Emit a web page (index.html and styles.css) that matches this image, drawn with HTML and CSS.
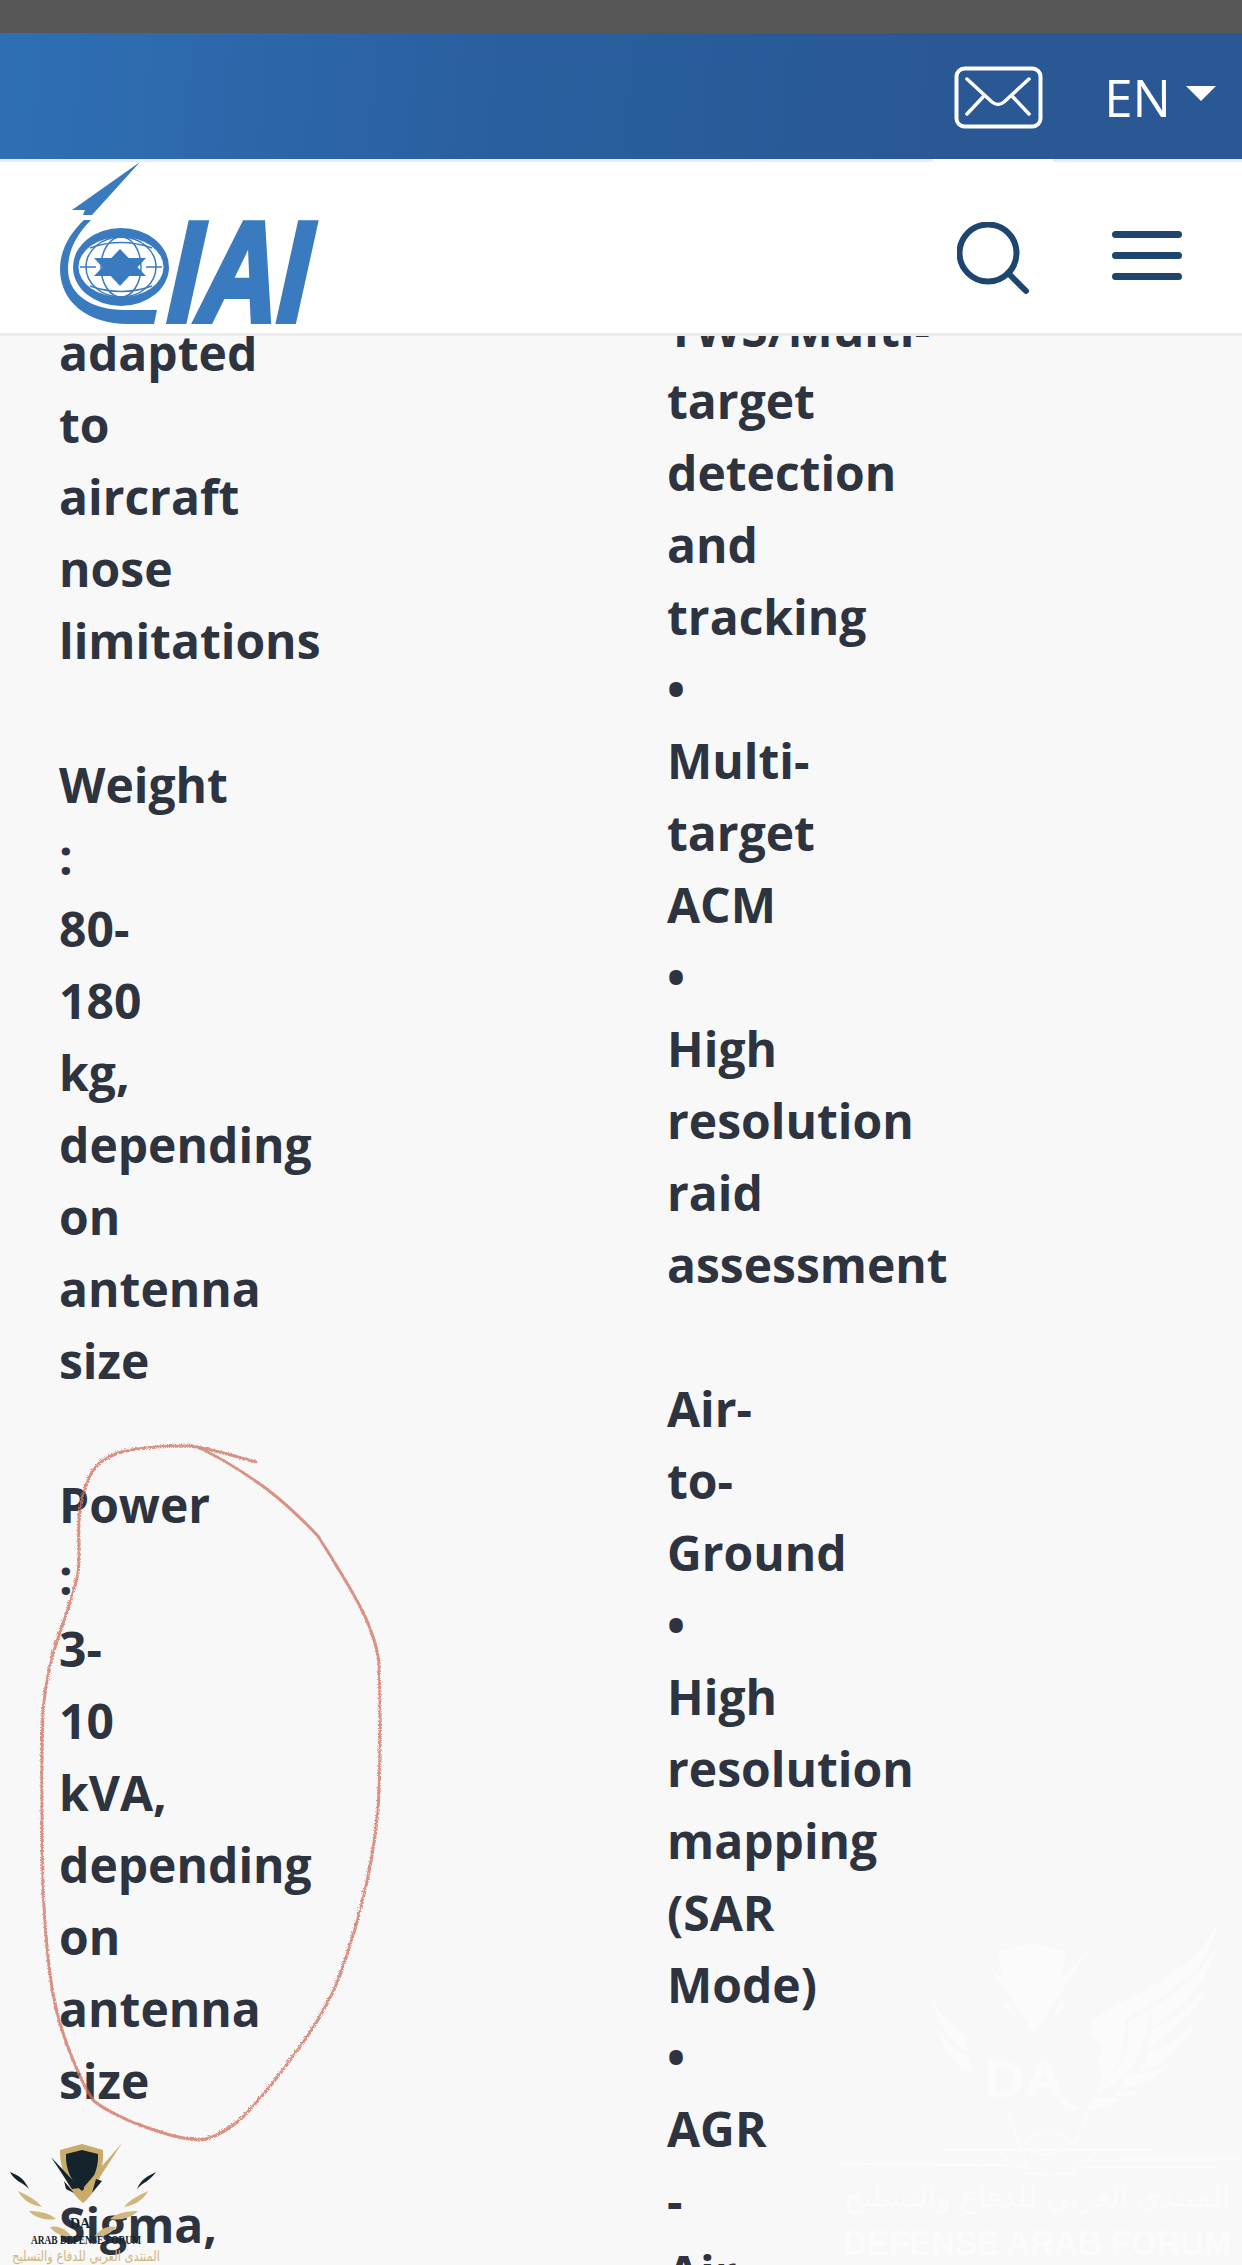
FILE: index.html
```html
<!DOCTYPE html>
<html lang="en">
<head>
    <meta charset="UTF-8">
    <title>IAI</title>
    <link rel="stylesheet" href="styles.css">
</head>
<body>
    <header class="header">
        <div class="status"></div>
        <div class="topbar">
            <svg class="icon_mail" width="90" height="64" viewBox="0 0 90 64" fill="none" stroke="#fff" stroke-linecap="round" stroke-linejoin="round">
                <rect x="2.5" y="2.5" width="84" height="58" rx="8" stroke-width="4"/>
                <path d="M13 13 L38 36 Q44 41 50 36 L75 13 M29 31 L13 48 M59 31 L75 48" stroke-width="3.5"/>
            </svg>
            <span class="lang">EN</span>
            <span class="caret"></span>
        </div>
        <div class="navbar">
            <svg class="logo" width="270" height="170" viewBox="55 160 270 170">
                <path fill="#3a7bbf" d="M140 163 L72 211 L85 211 L83 216 L92 216 Z"/>
                <path fill="#3a7bbf" d="M84 221 L91 221 C76 236 68 252 68 270 C68 296 92 311 125 311 L157 311 L154 325 L128 325 C88 325 60 303 60 270 C60 251 70 234 84 221 Z"/>
                <ellipse cx="121" cy="268" rx="48" ry="39" fill="#3a7bbf"/>
                <ellipse cx="121" cy="268" rx="42.5" ry="30" fill="#fff"/>
                <g fill="none" stroke="#3a7bbf" stroke-width="1.5">
                    <ellipse cx="121" cy="268" rx="35" ry="30"/>
                    <ellipse cx="121" cy="268" rx="20" ry="30"/>
                    <path d="M90 249 Q121 238 152 249 M90 287 Q121 298 152 287 M80 268 H96 M146 268 H162"/>
                </g>
                <path fill="#3a7bbf" d="M120 250 L146 277 L94 277 Z"/>
                <path fill="#3a7bbf" d="M120 287 L94 259 L146 259 Z"/>
                <text class="logo_text" transform="translate(167 322) skewX(-4)" textLength="140" lengthAdjust="spacingAndGlyphs">IAI</text>
            </svg>
            <div class="nav_icons">
                <svg width="76" height="76" viewBox="0 0 76 76" fill="none" stroke="#1d4570" stroke-linecap="round">
                    <circle cx="31" cy="31" r="28.5" stroke-width="6"/>
                    <path d="M51 51 L69 69" stroke-width="6"/>
                </svg>
                <div class="burger"><span></span><span></span><span></span></div>
            </div>
        </div>
    </header>

    <div class="main">
        <div class="col col_left">
            <p>adapted<br>to<br>aircraft<br>nose<br>limitations</p>
            <p>Weight<br>:<br>80-<br>180<br>kg,<br>depending<br>on<br>antenna<br>size</p>
            <p>Power<br>:<br>3-<br>10<br>kVA,<br>depending<br>on<br>antenna<br>size</p>
            <p>Sigma,</p>
        </div>
        <div class="col">
            <p>TWS/Multi-<br>target<br>detection<br>and<br>tracking<br>•<br>Multi-<br>target<br>ACM<br>•<br>High<br>resolution<br>raid<br>assessment</p>
            <p>Air-<br>to-<br>Ground<br>•<br>High<br>resolution<br>mapping<br>(SAR<br>Mode)<br>•<br>AGR<br>-<br>Air</p>
        </div>
    </div>

    <!-- pencil mark over the power block -->
    <svg class="scribble" width="1242" height="2265" viewBox="0 0 1242 2265" fill="none">
        <filter id="pencil"><feTurbulence baseFrequency="0.7" numOctaves="2" result="n"/><feDisplacementMap in="SourceGraphic" in2="n" scale="3"/></filter>
        <path filter="url(#pencil)" stroke="#cf6f5c" stroke-width="3" stroke-opacity="0.75" stroke-linecap="round"
            d="M255 1461 C235 1456 210 1447 187 1445 C165 1445 135 1447 117 1452 C103 1457 95 1464 90 1473 C82 1490 79 1505 78 1521 C77 1540 80 1555 77 1572 C72 1600 60 1625 53 1650 C46 1675 43 1695 42 1714 C40 1770 41 1825 42 1879 C43 1920 46 1950 50 1980 C53 2000 58 2020 63 2035 C72 2060 82 2085 93 2100 C105 2110 120 2116 133 2122 C155 2130 180 2139 200 2139 C215 2137 228 2128 240 2118 C260 2098 278 2075 293 2054 C310 2032 322 2012 333 1989 C345 1962 352 1935 360 1907 C368 1875 374 1842 377 1810 C380 1760 380 1710 378 1659 C375 1642 370 1628 363 1613 C350 1587 333 1560 317 1535 C300 1517 285 1503 267 1489 C245 1473 222 1458 200 1448"/>
    </svg>

    <svg class="forum_logo" width="160" height="125" viewBox="0 0 160 125">
        <path fill="#c9ab6c" d="M60 7 L82 1 L103 7 C104 30 96 50 83 60 C70 50 60 30 60 7 Z"/>
        <path fill="#14232c" d="M66 11 L82 7 L98 11 C99 26 92 40 82 48 C72 40 65 26 66 11 Z"/>
        <path fill="#c9ab6c" d="M122 0 L83 60 L84 44 Z"/>
        <path fill="#14232c" d="M51 14 L80 45 L72 46 Z M64 38 L74 50 L66 46 Z M102 38 L92 50 L96 36 Z"/>
        <g fill="#14232c"><path d="M10 29 C14 38 24 40 29 46 C24 36 20 33 10 29 Z"/><path d="M156 29 C150 38 142 40 137 46 C141 36 148 33 156 29 Z"/></g>
        <g fill="#d1b77f">
            <path d="M18 48 C26 52 36 56 42 64 C30 62 22 56 18 48 Z"/>
            <path d="M148 48 C140 52 130 56 124 64 C136 62 144 56 148 48 Z"/>
            <path d="M29 68 C38 68 50 70 56 76 C44 78 34 74 29 68 Z"/>
            <path d="M138 68 C128 68 116 70 110 76 C122 78 132 74 138 68 Z"/>
            <path d="M50 84 C58 82 66 86 72 94 C62 94 54 90 50 84 Z"/>
            <path d="M116 84 C108 82 100 86 94 94 C104 94 112 90 116 84 Z"/>
        </g>
        <text class="forum_da" x="70" y="85">DA</text>
        <text class="forum_en" x="31" y="101" textLength="110" lengthAdjust="spacingAndGlyphs">ARAB DEFENSE FORUM</text>
        <text class="forum_ar" x="12" y="118" textLength="148" lengthAdjust="spacingAndGlyphs">المنتدى العربي للدفاع والتسليح</text>
    </svg>

    <svg class="forum_faint" width="402" height="365" viewBox="-120 0 1206 1095">
        <g class="faint_fill">
            <path d="M355 155 L455 130 L557 155 C555 190 548 225 535 250 L635 135 L462 400 L325 195 L375 245 C362 215 356 185 355 155 Z"/>
            <path d="M378 305 L415 355 L372 325 Z M545 305 L552 325 L518 350 Z"/>
            <path d="M155 295 C180 350 220 380 260 410 L262 460 C210 420 170 370 155 295 Z M175 385 C200 430 230 450 265 470 L278 515 C230 510 185 450 175 385 Z"/>
            <path d="M1022 45 C1000 110 950 170 870 225 C800 270 720 310 650 350 C630 370 630 395 640 410 C665 430 675 460 650 480 C665 510 665 530 660 550 C710 520 735 470 735 360 C790 320 860 290 900 250 C950 215 985 180 1022 45 Z"/>
            <path d="M1000 155 C985 250 900 330 815 380 L815 325 C890 280 960 220 1000 155 Z M980 255 C960 330 880 390 805 445 L815 390 C880 360 940 320 980 255 Z"/>
            <path d="M805 335 C800 450 760 530 650 580 L660 555 C730 510 750 440 745 365 Z M945 370 C910 440 850 490 780 515 L805 460 C860 440 910 410 945 370 Z"/>
            <path d="M860 500 C820 540 780 560 715 565 L740 525 C790 525 830 515 860 500 Z M790 570 C760 585 735 590 710 590 L705 578 Z M725 600 C690 620 650 630 615 630 L640 595 C670 590 700 590 725 600 Z M535 590 L605 630 L560 635 Z"/>
        </g>
        <g class="faint_line" fill="none">
            <path d="M190 750 H825 M710 775 H1075 M-120 790 Q200 795 385 795 M600 802 H1010 M385 640 L430 760 L440 800 M622 640 L580 740"/>
            <path d="M430 730 C480 700 480 690 505 690 C530 690 530 700 580 730 M430 745 C470 755 490 770 505 765 C530 755 550 745 580 745"/>
            <path d="M360 755 L385 785 L430 800 L435 820 L490 820 L505 835 L525 820 L580 820 L590 790 L630 780 L650 755"/>
        </g>
        <text class="faint_da" x="312" y="590" textLength="240" lengthAdjust="spacingAndGlyphs">DA</text>
        <text class="faint_ar" x="-110" y="920" textLength="1160" lengthAdjust="spacingAndGlyphs">المنتدى العربي للدفاع والتسليح</text>
        <text class="faint_en" x="-110" y="1065" textLength="1165" lengthAdjust="spacingAndGlyphs">DEFENSE ARAB FORUM</text>
    </svg>
</body>
</html>
```

FILE: styles.css
```css
* {
    margin: 0;
    padding: 0;
    box-sizing: border-box;
}
html, body {
    height: 100%;
    overflow: hidden;
}
body {
    background-color: #f8f8f9;
    font-family: "Open Sans", sans-serif;
    color: #2d3440;
    position: relative;
}
.header {
    position: absolute;
    top: 0;
    left: 0;
    width: 100%;
    z-index: 2;
}
.status {
    height: 33px;
    background-color: #575757;
}
.topbar {
    height: 126px;
    background: linear-gradient(95deg, #2f6fb5, #2a5f9f 40%, #295895 75%);
    display: flex;
    align-items: center;
    justify-content: flex-end;
    padding-right: 26px;
}
.icon_mail {
    margin-right: 60px;
    margin-top: 3px;
}
.lang {
    color: #fff;
    font-size: 51px;
    line-height: 1;
    margin-right: 15px;
    margin-top: 2px;
}
.caret {
    border-left: 15px solid transparent;
    border-right: 15px solid transparent;
    border-top: 15px solid #fff;
    margin-top: -6px;
}
.navbar {
    height: 177px;
    background-color: #fff;
    border-top: 3px solid #e5edf6;
    border-bottom: 3px solid #ececec;
    display: flex;
    justify-content: space-between;
    align-items: flex-start;
    padding-left: 55px;
    padding-right: 60px;
    position: relative;
}
.navbar::before {
    content: "";
    position: absolute;
    top: -3px;
    left: 933px;
    width: 120px;
    height: 3px;
    background-color: #fff;
}
.logo {
    flex: none;
    margin-top: -3px;
}
.logo_text {
    font-family: "Liberation Sans", sans-serif;
    font-weight: 700;
    font-style: italic;
    font-size: 142px;
    fill: #3a7bbf;
    stroke: #3a7bbf;
    stroke-width: 6px;
}
.nav_icons {
    display: flex;
    align-items: flex-start;
    gap: 79px;
    padding-top: 60px;
}
.burger {
    width: 70px;
    display: flex;
    flex-direction: column;
    gap: 14px;
    padding-top: 9px;
}
.burger span {
    height: 7px;
    border-radius: 4px;
    background-color: #1d4570;
}
.main {
    display: grid;
    grid-template-columns: 608px 1fr;
    padding-left: 59px;
    padding-top: 293px;
    font-size: 48px;
    font-weight: 700;
    line-height: 72px;
}
.col p {
    margin-bottom: 72px;
}
.col_left {
    margin-top: 24px;
}
.scribble {
    position: absolute;
    top: 0;
    left: 0;
    z-index: 1;
    pointer-events: none;
}
.forum_logo {
    position: absolute;
    left: 0;
    top: 2143px;
    z-index: 1;
}
.forum_da {
    font-family: "Liberation Serif", serif;
    font-weight: 700;
    font-size: 14px;
    fill: #14232c;
}
.forum_en {
    font-family: "Liberation Serif", serif;
    font-weight: 700;
    font-size: 12px;
    fill: #14232c;
}
.forum_ar {
    font-family: "DejaVu Sans", sans-serif;
    font-size: 14px;
    fill: #d1b77f;
}
.forum_faint {
    position: absolute;
    left: 840px;
    top: 1900px;
    z-index: 1;
}
.faint_fill {
    fill: #fbfbfb;
}
.faint_line {
    stroke: #fbfbfb;
    stroke-width: 5px;
}
.forum_faint text {
    fill: #fbfbfb;
    font-family: "Liberation Sans", sans-serif;
}
.faint_da {
    font-size: 156px;
    font-weight: 700;
}
.faint_ar {
    font-size: 90px;
}
.faint_en {
    font-size: 105px;
    font-weight: 700;
}
```
